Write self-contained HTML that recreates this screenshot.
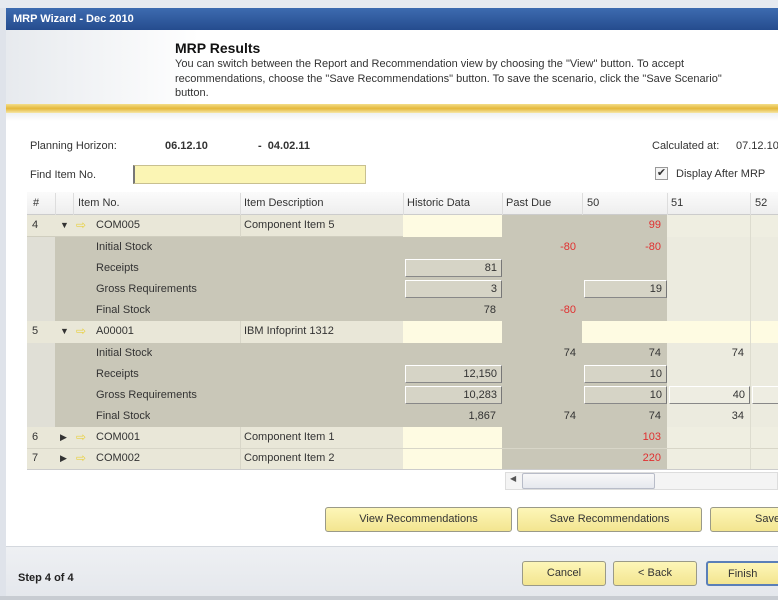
<!DOCTYPE html>
<html><head><meta charset="utf-8"><style>
*{margin:0;padding:0;box-sizing:border-box}
body{width:778px;height:600px;overflow:hidden;background:#fff;font-family:"Liberation Sans",sans-serif;font-size:11px;color:#333;position:relative}
div{position:absolute}
.c{height:21px;line-height:21px;white-space:nowrap;overflow:hidden}
.r{text-align:right;padding-right:6px}
.red{color:#e03030}
.box{background:#d6d4c6;border:1px solid #fff;border-right:1px solid #777;border-bottom:1px solid #888;height:18px;line-height:16px;text-align:right;padding-right:4px;top:1px}
.btn{background:linear-gradient(#fdf6b8,#f3e590);border:1px solid #9a9a88;border-radius:3px;text-align:center;line-height:23px;height:25px;color:#333;white-space:nowrap;overflow:hidden}
</style></head><body>
<div style="left:0;top:0;width:778px;height:8px;background:#e6eaf0"></div>
<div style="left:6px;top:8px;width:772px;height:22px;background:linear-gradient(#3d6bb0,#254c8e);color:#fff;font-weight:bold;font-size:11px;line-height:22px;padding-left:7px">MRP Wizard - Dec 2010</div>
<div style="left:0;top:8px;width:6px;height:592px;background:#dfe3ea"></div>
<div style="left:6px;top:30px;width:772px;height:76px;background:linear-gradient(90deg,#e7eaee,#fff 25%)"></div>
<div style="left:175px;top:40px;font-weight:bold;font-size:14px;color:#111">MRP Results</div>
<div style="left:175px;top:57px;width:610px;line-height:14.5px;font-size:11px;color:#333;white-space:nowrap">You can switch between the Report and Recommendation view by choosing the "View" button. To accept<br>recommendations, choose the "Save Recommendations" button. To save the scenario, click the "Save Scenario"<br>button.</div>
<div style="left:6px;top:104px;width:772px;height:9px;background:linear-gradient(#f3de8a,#e5b83a,#f6e6a6)"></div>
<div style="left:6px;top:113px;width:772px;height:8px;background:linear-gradient(#eef0f2,#fff)"></div>

<div style="left:30px;top:140px;">Planning Horizon:</div>
<div style="left:165px;top:140px;font-weight:bold">06.12.10</div>
<div style="left:258px;top:140px;font-weight:bold">-&nbsp; 04.02.11</div>
<div style="left:652px;top:140px;">Calculated at:</div>
<div style="left:736px;top:140px;">07.12.10</div>
<div style="left:30px;top:169px;">Find Item No.</div>
<div style="left:133px;top:165px;width:233px;height:19px;background:#fbf5b4;border:1px solid #c8c090;border-left:2px solid #777"></div>
<div style="left:655px;top:167px;width:13px;height:13px;border:1px solid #999;background:#f4f4f4;font-size:11px;line-height:11px;text-align:center">✔</div>
<div style="left:676px;top:168px;">Display After MRP</div>

<!-- table -->
<div style="left:27px;top:192px;width:751px;height:278px;background:#fff;border:1px solid #ccc"></div>
<div style="left:27px;top:192px;width:751px;height:23px;background:linear-gradient(#fbfbfb,#eeeeee);border-bottom:1px solid #ccc"></div>
<div class="c" style="left:33px;top:193px">#</div>
<div class="c" style="left:78px;top:193px">Item No.</div>
<div class="c" style="left:244px;top:193px">Item Description</div>
<div class="c" style="left:407px;top:193px">Historic Data</div>
<div class="c" style="left:506px;top:193px">Past Due</div>
<div class="c" style="left:587px;top:193px">50</div>
<div class="c" style="left:671px;top:193px">51</div>
<div class="c" style="left:755px;top:193px">52</div>
<div style="left:55px;top:193px;width:1px;height:22px;background:#ddd"></div>
<div style="left:73px;top:193px;width:1px;height:22px;background:#ddd"></div>
<div style="left:240px;top:193px;width:1px;height:22px;background:#ddd"></div>
<div style="left:403px;top:193px;width:1px;height:22px;background:#ddd"></div>
<div style="left:502px;top:193px;width:1px;height:22px;background:#ddd"></div>
<div style="left:582px;top:193px;width:1px;height:22px;background:#ddd"></div>
<div style="left:667px;top:193px;width:1px;height:22px;background:#ddd"></div>
<div style="left:750px;top:193px;width:1px;height:22px;background:#ddd"></div>

<div style="left:27px;top:215px;width:376px;height:22px;background:#e9e7d8;border-bottom:1px solid #d0cebf"></div>
<div style="left:403px;top:215px;width:99px;height:22px;background:#fefbe2"></div>
<div style="left:502px;top:215px;width:165px;height:22px;background:#c9c7b8"></div>
<div style="left:667px;top:215px;width:111px;height:22px;background:#efeee1"></div>
<div style="left:27px;top:237px;width:28px;height:84px;background:#e0dfd6"></div>
<div style="left:55px;top:237px;width:612px;height:84px;background:#c9c7b8"></div>
<div style="left:667px;top:237px;width:111px;height:84px;background:#ecebdf"></div>
<div style="left:27px;top:321px;width:376px;height:22px;background:#e9e7d8"></div>
<div style="left:403px;top:321px;width:99px;height:22px;background:#fefbe2"></div>
<div style="left:502px;top:321px;width:80px;height:22px;background:#c9c7b8"></div>
<div style="left:582px;top:321px;width:196px;height:22px;background:#fefbe2"></div>
<div style="left:27px;top:343px;width:28px;height:84px;background:#e0dfd6"></div>
<div style="left:55px;top:343px;width:612px;height:84px;background:#c9c7b8"></div>
<div style="left:667px;top:343px;width:111px;height:84px;background:#ecebdf"></div>
<div style="left:27px;top:427px;width:376px;height:42px;background:#e9e7d8"></div>
<div style="left:403px;top:427px;width:99px;height:42px;background:#fefbe2"></div>
<div style="left:502px;top:427px;width:165px;height:42px;background:#c9c7b8"></div>
<div style="left:667px;top:427px;width:111px;height:42px;background:#efeee1"></div>
<div style="left:27px;top:448px;width:751px;height:1px;background:#d8d6c8"></div>
<div style="left:750px;top:215px;width:1px;height:254px;background:#dddccf"></div>
<div style="left:240px;top:215px;width:1px;height:22px;background:#d8d6c8"></div>
<div style="left:240px;top:321px;width:1px;height:22px;background:#d8d6c8"></div>
<div style="left:240px;top:427px;width:1px;height:42px;background:#d8d6c8"></div>

<div class="c" style="left:32px;top:215px">4</div>
<div class="c" style="left:60px;top:215px;font-size:9px">▼</div>
<div class="c" style="left:76px;top:215px;color:#e8d040;font-size:12px">⇨</div>
<div class="c" style="left:96px;top:215px">COM005</div>
<div class="c" style="left:244px;top:215px">Component Item 5</div>
<div class="c r red" style="left:582px;top:215px;width:85px">99</div>
<div class="c" style="left:96px;top:237px">Initial Stock</div>
<div class="c" style="left:96px;top:258px">Receipts</div>
<div class="c" style="left:96px;top:279px">Gross Requirements</div>
<div class="c" style="left:96px;top:300px">Final Stock</div>
<div class="c r red" style="left:502px;top:237px;width:80px">-80</div>
<div class="c r red" style="left:582px;top:237px;width:85px">-80</div>
<div style="left:0;top:258px"><div class="box" style="left:405px;width:97px">81</div></div>
<div style="left:0;top:279px"><div class="box" style="left:405px;width:97px">3</div><div class="box" style="left:584px;width:83px">19</div></div>
<div class="c r" style="left:403px;top:300px;width:99px">78</div>
<div class="c r red" style="left:502px;top:300px;width:80px">-80</div>

<div class="c" style="left:32px;top:321px">5</div>
<div class="c" style="left:60px;top:321px;font-size:9px">▼</div>
<div class="c" style="left:76px;top:321px;color:#e8d040;font-size:12px">⇨</div>
<div class="c" style="left:96px;top:321px">A00001</div>
<div class="c" style="left:244px;top:321px">IBM Infoprint 1312</div>
<div class="c" style="left:96px;top:343px">Initial Stock</div>
<div class="c" style="left:96px;top:364px">Receipts</div>
<div class="c" style="left:96px;top:385px">Gross Requirements</div>
<div class="c" style="left:96px;top:406px">Final Stock</div>
<div class="c r" style="left:502px;top:343px;width:80px">74</div>
<div class="c r" style="left:582px;top:343px;width:85px">74</div>
<div class="c r" style="left:667px;top:343px;width:83px">74</div>
<div style="left:0;top:364px"><div class="box" style="left:405px;width:97px">12,150</div><div class="box" style="left:584px;width:83px">10</div></div>
<div style="left:0;top:385px"><div class="box" style="left:405px;width:97px">10,283</div><div class="box" style="left:584px;width:83px">10</div><div class="box" style="left:669px;width:81px;background:#eeede2">40</div><div class="box" style="left:752px;width:30px;background:#eeede2"></div></div>
<div class="c r" style="left:403px;top:406px;width:99px">1,867</div>
<div class="c r" style="left:502px;top:406px;width:80px">74</div>
<div class="c r" style="left:582px;top:406px;width:85px">74</div>
<div class="c r" style="left:667px;top:406px;width:83px">34</div>

<div class="c" style="left:32px;top:427px">6</div>
<div class="c" style="left:60px;top:427px;font-size:9px">▶</div>
<div class="c" style="left:76px;top:427px;color:#e8d040;font-size:12px">⇨</div>
<div class="c" style="left:96px;top:427px">COM001</div>
<div class="c" style="left:244px;top:427px">Component Item 1</div>
<div class="c r red" style="left:582px;top:427px;width:85px">103</div>
<div class="c" style="left:32px;top:448px">7</div>
<div class="c" style="left:60px;top:448px;font-size:9px">▶</div>
<div class="c" style="left:76px;top:448px;color:#e8d040;font-size:12px">⇨</div>
<div class="c" style="left:96px;top:448px">COM002</div>
<div class="c" style="left:244px;top:448px">Component Item 2</div>
<div class="c r red" style="left:582px;top:448px;width:85px">220</div>

<div style="left:505px;top:472px;width:273px;height:18px;background:#f4f4f4;border:1px solid #ddd"></div>
<div style="left:510px;top:474px;font-size:8px;color:#555">◀</div>
<div style="left:522px;top:473px;width:133px;height:16px;background:linear-gradient(#f8f8f8,#e6e8ee);border:1px solid #b8bcc8;border-radius:2px"></div>

<div class="btn" style="left:325px;top:507px;width:187px">View Recommendations</div>
<div class="btn" style="left:517px;top:507px;width:185px">Save Recommendations</div>
<div class="btn" style="left:710px;top:507px;width:80px;text-align:left;padding-left:44px">Save Scenario</div>

<div style="left:6px;top:546px;width:772px;height:54px;background:linear-gradient(#eef0f3,#e4e7ec);border-top:1px solid #d4d8de"></div>
<div style="left:18px;top:572px;font-weight:bold;color:#222">Step 4 of 4</div>
<div class="btn" style="left:522px;top:561px;width:84px">Cancel</div>
<div class="btn" style="left:613px;top:561px;width:84px">&lt; Back</div>
<div class="btn" style="left:706px;top:561px;width:84px;border:2px solid #5a7fb8;text-align:left;padding-left:20px">Finish</div>
<div style="left:0;top:596px;width:778px;height:4px;background:#c8ccd2"></div>
</body></html>
